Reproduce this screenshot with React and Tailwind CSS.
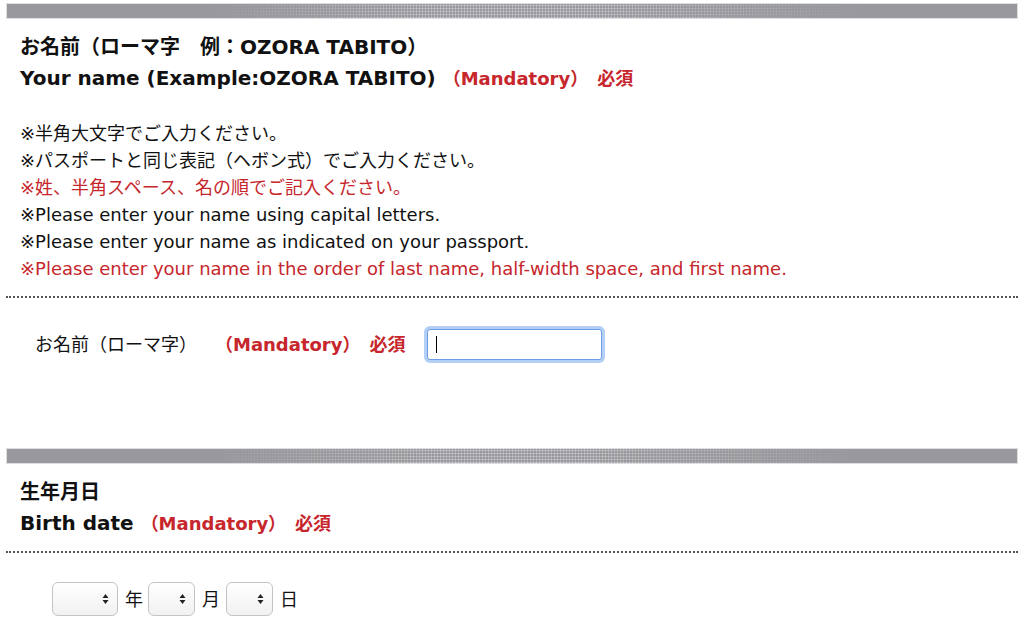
const font = "font-['DejaVu_Sans','Noto_Sans_CJK_JP',sans-serif]";

function Bar() {
  return (
    <div className="relative mx-[6px] h-[16px] border border-[#dedee0] bg-[#98989d] overflow-hidden">
      <div className="absolute inset-0 bg-[radial-gradient(circle,#c9c9cd_0.9px,transparent_1.1px)] bg-[length:3px_3px] [mask-image:linear-gradient(90deg,transparent_20%,black_42%,black_58%,transparent_85%)]" />
    </div>
  );
}

function Dotted() {
  return <div className="mx-[6px] border-t-2 border-dotted border-[#555]" />;
}

function Mandatory() {
  return <span className="text-[#c6262c] text-[18px] font-bold">（Mandatory）　必須</span>;
}

function FakeSelect({ w }) {
  return (
    <div
      className={`flex items-center justify-end pr-[8px] h-[34px] rounded-[6px] border border-[#c4c4c4] bg-[linear-gradient(#ffffff,#f1f1f1)] ${w}`}
    >
      <svg width="7" height="12" viewBox="0 0 7 12">
        <path d="M3.5 1 L6.5 5 L0.5 5 Z" fill="#222" />
        <path d="M3.5 11 L6.5 7 L0.5 7 Z" fill="#222" />
      </svg>
    </div>
  );
}

export default function App() {
  return (
    <div className={`w-[1024px] h-[625px] overflow-hidden bg-white pt-[3px] text-[#111] ${font}`}>
      <Bar />

      <div className="px-[20px] pt-[13px]">
        <div className="text-[20px] leading-[31px] font-bold">お名前（ローマ字　例：OZORA TABITO）</div>
        <div className="text-[20px] leading-[31px] font-bold">
          Your name (Example:OZORA TABITO) <Mandatory />
        </div>

        <div className="mt-[26px] text-[18px] leading-[27px]">
          <div>※半角大文字でご入力ください。</div>
          <div>※パスポートと同じ表記（ヘボン式）でご入力ください。</div>
          <div className="text-[#c6262c]">※姓、半角スペース、名の順でご記入ください。</div>
          <div>※Please enter your name using capital letters.</div>
          <div>※Please enter your name as indicated on your passport.</div>
          <div className="text-[#c6262c]">
            ※Please enter your name in the order of last name, half-width space, and first name.
          </div>
        </div>
      </div>

      <div className="mt-[14px]">
        <Dotted />
      </div>

      <div className="mt-[28px] flex items-center h-[36px] pl-[35px] text-[18px]">
        <span>お名前（ローマ字）</span>
        <span className="ml-[18px]">
          <Mandatory />
        </span>
        <div className="ml-[21px] w-[175px] h-[31px] rounded-[3px] border border-[#6d9ce6] shadow-[0_0_0_3px_#b3cff6] bg-white flex items-center pl-[8px]">
          <span className="w-px h-[17px] bg-black" />
        </div>
      </div>

      <div className="mt-[86px]">
        <Bar />
      </div>

      <div className="px-[20px] pt-[13px]">
        <div className="text-[20px] leading-[31px] font-bold">生年月日</div>
        <div className="text-[20px] leading-[31px] font-bold">
          Birth date <Mandatory />
        </div>
      </div>

      <div className="mt-[12px]">
        <Dotted />
      </div>

      <div className="mt-[29px] pl-[52px] flex items-center text-[18px]">
        <FakeSelect w="w-[66px]" />
        <span className="ml-[7px] mr-[5px]">年</span>
        <FakeSelect w="w-[47px]" />
        <span className="ml-[7px] mr-[6px]">月</span>
        <FakeSelect w="w-[47px]" />
        <span className="ml-[7px]">日</span>
      </div>
    </div>
  );
}
